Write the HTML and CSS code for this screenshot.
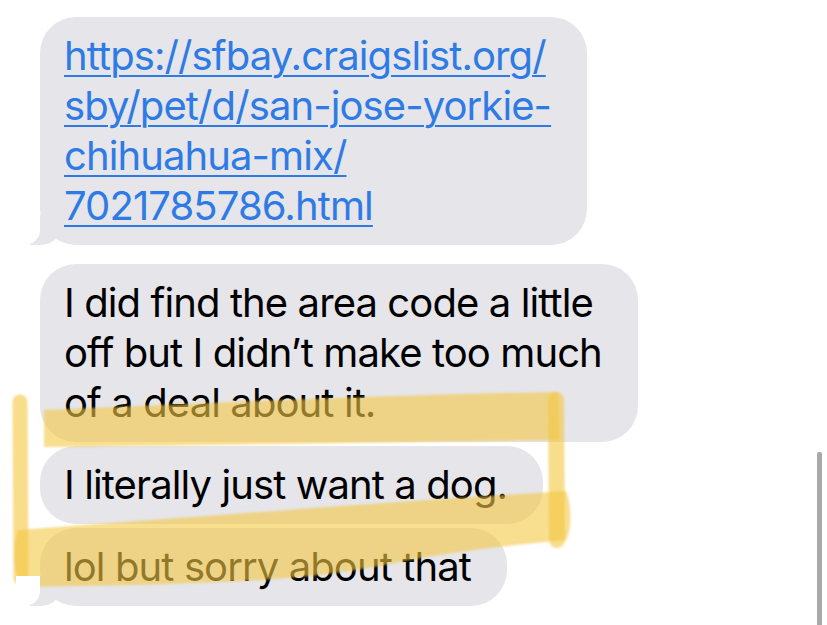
FILE: index.html
```html
<!DOCTYPE html>
<html>
<head>
<meta charset="utf-8">
<link rel="stylesheet" href="styles.css">
</head>
<body>
<div class="thread">
  <div class="bubble tail link-bubble">
    <a class="link" href="#">https://sfbay.craigslist.org/<br>sby/pet/d/san-jose-yorkie-<br>chihuahua-mix/<br>7021785786.html</a>
  </div>
  <div class="bubble group-start">I did find the area code a little<br>off but I didn’t make too much<br>of a deal about it.</div>
  <div class="bubble">I literally just want a dog.</div>
  <div class="bubble tail">lol but sorry about that</div>
</div>
<div class="scrollbar"></div>
<svg class="marker" width="827" height="625" viewBox="0 0 827 625">
  <defs>
    <filter id="soft" x="-10%" y="-10%" width="120%" height="120%">
      <feGaussianBlur stdDeviation="1.3"/>
    </filter>
  </defs>
  <g filter="url(#soft)">
    <path class="stroke" d="M20 402 L21 578" stroke-width="15" stroke-linecap="round" fill="none"/>
    <path class="fillmark" d="M44 410 C 200 403 420 394 558 392 L 560 440 C 420 442 200 445 44 447 Z"/>
    <path class="stroke" d="M556 400 L557 540" stroke-width="16" stroke-linecap="round" fill="none"/>
    <path class="fillmark" d="M18 530 C 200 516 420 500 566 491 C 572 505 572 530 566 540 C 480 548 430 556 400 562 C 320 578 260 584 22 587 C 13 575 12 545 18 530 Z"/>
  </g>
</svg>
</body>
</html>
```
FILE: styles.css
```css
html, body {
  margin: 0;
  padding: 0;
  background: #ffffff;
}
body {
  width: 827px;
  height: 625px;
  overflow: hidden;
  position: relative;
  font-family: "Inter", "Liberation Sans", sans-serif;
}
.thread {
  display: flex;
  flex-direction: column;
  align-items: flex-start;
  gap: 4px;
  padding: 17px 0 0 40px;
}
.bubble {
  position: relative;
  background: #e5e5ea;
  color: #000;
  font-size: 40px;
  line-height: 50px;
  letter-spacing: -0.9px;
  padding: 14px 36px 14px 24px;
  border-radius: 36px;
}
.group-start {
  margin-top: 15px;
}
.link {
  color: #2f7be5;
  text-decoration: underline;
  text-decoration-thickness: 2px;
  text-underline-offset: 5px;
}
.tail::before {
  content: "";
  position: absolute;
  bottom: 0;
  left: -10px;
  width: 34px;
  height: 30px;
  background: #e5e5ea;
  border-bottom-right-radius: 24px;
  z-index: 0;
}
.tail::after {
  content: "";
  position: absolute;
  bottom: 0;
  left: -24px;
  width: 24px;
  height: 30px;
  background: #ffffff;
  border-bottom-right-radius: 15px;
  z-index: 1;
}
.scrollbar {
  position: absolute;
  left: 817px;
  top: 452px;
  width: 5px;
  height: 180px;
  background: #a9a9a9;
  border-radius: 2px;
}
.marker {
  position: absolute;
  top: 0;
  left: 0;
  pointer-events: none;
}
.stroke {
  stroke: #f3c843;
  stroke-opacity: 0.62;
}
.fillmark {
  fill: #f3c843;
  fill-opacity: 0.6;
}
```
